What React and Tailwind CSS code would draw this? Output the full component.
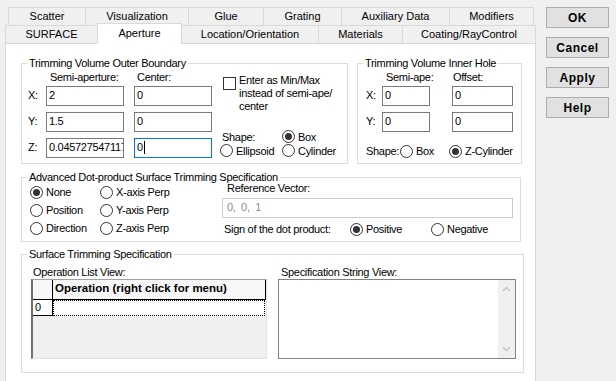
import React from "react";

const backTabs = [
    ["Scatter", 77],
    ["Visualization", 103],
    ["Glue", 75],
    ["Grating", 78],
    ["Auxiliary Data", 108],
    ["Modifiers", 85],
];

const frontTabs = [
    ["SURFACE", 92],
    ["Aperture", 85, true],
    ["Location/Orientation", 136],
    ["Materials", 84],
    ["Coating/RayControl", 134],
];

function Radio({ checked, label, className = "" }) {
    return (
        <div className={`flex h-[14px] items-center ${className}`}>
            <span className="flex h-[13px] w-[13px] shrink-0 items-center justify-center rounded-full border border-[#333333] bg-white">
                {checked && <span className="h-[7px] w-[7px] rounded-full bg-[#333333]" />}
            </span>
            <span className="ml-[3px] whitespace-nowrap">{label}</span>
        </div>
    );
}

function Field({ children, className = "" }) {
    return (
        <div
            className={`flex h-[20px] shrink-0 items-center overflow-hidden whitespace-nowrap border border-[#7a7a7a] bg-white pl-[2px] ${className}`}
        >
            {children}
        </div>
    );
}

function Group({ title, className = "", children }) {
    return (
        <fieldset className={`shrink-0 border border-[#dcdcdc] ${className}`}>
            <legend className="ml-[5px] px-[2px] leading-[13px]">{title}</legend>
            {children}
        </fieldset>
    );
}

function Chevron({ up }) {
    return (
        <svg width="9" height="6" viewBox="0 0 9 6">
            <path
                d={up ? "M1 5 L4.5 1.5 L8 5" : "M1 1 L4.5 4.5 L8 1"}
                fill="none"
                stroke="#c2c2c2"
                strokeWidth="1.4"
            />
        </svg>
    );
}

function OuterBoundary() {
    return (
        <Group title="Trimming Volume Outer Boundary" className="h-[107px] w-[327px]">
            <div className="flex pl-[6px]">
                <div className="flex flex-col">
                    <div className="flex h-[14px] leading-[14px]">
                        <span className="ml-[22px] w-[87px]">Semi-aperture:</span>
                        <span>Center:</span>
                    </div>
                    <div className="mt-[2px] flex h-[20px] items-center">
                        <span className="w-[18px]">X:</span>
                        <Field className="w-[78px]">2</Field>
                        <Field className="ml-[10px] w-[78px]">0</Field>
                    </div>
                    <div className="mt-[6px] flex h-[20px] items-center">
                        <span className="w-[18px]">Y:</span>
                        <Field className="w-[78px]">1.5</Field>
                        <Field className="ml-[10px] w-[78px]">0</Field>
                    </div>
                    <div className="mt-[6px] flex h-[20px] items-center">
                        <span className="w-[18px]">Z:</span>
                        <Field className="w-[78px]">0.045727547117</Field>
                        <Field className="ml-[10px] w-[78px] border-[#0078d7]">
                            0<span className="ml-[1px] h-[13px] w-[1px] bg-black" />
                        </Field>
                    </div>
                </div>
                <div className="ml-[8px] flex flex-col pt-[4px]">
                    <div className="flex">
                        <span className="ml-[3px] mt-[3px] h-[13px] w-[13px] shrink-0 border border-[#333333] bg-white" />
                        <div className="ml-[3px] leading-[13px]">
                            <div>Enter as Min/Max</div>
                            <div>instead of semi-ape/</div>
                            <div>center</div>
                        </div>
                    </div>
                    <div className="mt-[17px] grid grid-cols-[62px_auto] leading-[14px]">
                        <span className="pl-[2px]">Shape:</span>
                        <Radio checked label="Box" />
                        <Radio label="Ellipsoid" />
                        <Radio label="Cylinder" />
                    </div>
                </div>
            </div>
        </Group>
    );
}

function InnerHole() {
    return (
        <Group title="Trimming Volume Inner Hole" className="ml-[9px] h-[107px] w-[165px]">
            <div className="flex flex-col pl-[8px]">
                <div className="flex h-[14px] leading-[14px]">
                    <span className="ml-[20px] w-[67px]">Semi-ape:</span>
                    <span>Offset:</span>
                </div>
                <div className="mt-[2px] flex h-[20px] items-center">
                    <span className="w-[16px]">X:</span>
                    <Field className="w-[48px]">0</Field>
                    <Field className="ml-[22px] w-[61px]">0</Field>
                </div>
                <div className="mt-[6px] flex h-[20px] items-center">
                    <span className="w-[16px]">Y:</span>
                    <Field className="w-[48px]">0</Field>
                    <Field className="ml-[22px] w-[61px]">0</Field>
                </div>
                <div className="mt-[13px] flex h-[14px] items-center">
                    <span className="w-[34px]">Shape:</span>
                    <Radio label="Box" className="w-[49px]" />
                    <Radio checked label="Z-Cylinder" />
                </div>
            </div>
        </Group>
    );
}

function DotProduct() {
    return (
        <Group
            title="Advanced Dot-product Surface Trimming Specification"
            className="mt-[7px] h-[71px] w-[500px]"
        >
            <div className="flex pl-[8px]">
                <div className="flex w-[70px] flex-col">
                    <Radio checked label="None" className="h-[18px]" />
                    <Radio label="Position" className="h-[18px]" />
                    <Radio label="Direction" className="h-[18px]" />
                </div>
                <div className="flex w-[122px] flex-col">
                    <Radio label="X-axis Perp" className="h-[18px]" />
                    <Radio label="Y-axis Perp" className="h-[18px]" />
                    <Radio label="Z-axis Perp" className="h-[18px]" />
                </div>
                <div className="-mt-[2px] flex flex-col">
                    <div className="h-[12px] pl-[5px] leading-[12px]">Reference Vector:</div>
                    <Field className="mt-[4px] h-[19px] w-[291px] border-[#cccccc] pl-[4px] text-[#8a8a8a]">
                        0, &nbsp;0, &nbsp;1
                    </Field>
                    <div className="mt-[5px] flex h-[14px] items-center">
                        <span className="w-[128px] pl-[2px]">Sign of the dot product:</span>
                        <Radio checked label="Positive" className="w-[81px]" />
                        <Radio label="Negative" />
                    </div>
                </div>
            </div>
        </Group>
    );
}

function TrimmingSpec() {
    return (
        <Group title="Surface Trimming Specification" className="mt-[6px] h-[125px] w-[503px]">
            <div className="flex pl-[9px] pt-[4px]">
                <div className="flex flex-col">
                    <div className="h-[14px] pl-[2px] leading-[14px]">Operation List View:</div>
                    <div className="flex h-[80px] w-[236px] flex-col border-b border-l-2 border-r border-t border-b-[#e3e3e3] border-l-[#6f6f6f] border-r-[#e3e3e3] border-t-[#a0a0a0] bg-[#f0f0f0]">
                        <div className="flex h-[20px] border-b border-black bg-[#f7f7f7]">
                            <div className="w-[20px] border-r border-black" />
                            <div className="flex w-[213px] items-center border-r border-black pl-[2px] text-[11.5px] font-bold tracking-normal">
                                Operation (right click for menu)
                            </div>
                        </div>
                        <div className="flex h-[16px]">
                            <div className="flex w-[20px] items-center border-b border-r border-black bg-white pl-[2px]">
                                0
                            </div>
                            <div className="w-[212px] border border-dotted border-black bg-white" />
                        </div>
                    </div>
                </div>
                <div className="ml-[11px] flex flex-col">
                    <div className="h-[14px] pl-[3px] leading-[14px]">Specification String View:</div>
                    <div className="flex h-[80px] w-[238px] justify-end border border-[#828282] bg-white">
                        <div className="flex w-[17px] flex-col items-center justify-between bg-[#f0f0f0] py-[6px]">
                            <Chevron up />
                            <Chevron />
                        </div>
                    </div>
                </div>
            </div>
        </Group>
    );
}

export default function App() {
    return (
        <div className="flex h-[381px] w-[616px] overflow-hidden bg-[#f0f0f0] font-['Liberation_Sans',Arial,sans-serif] text-[11px] text-black">
            <div className="ml-[5px] mt-[7px] flex w-[531px] shrink-0 flex-col">
                <div className="ml-[3px] flex h-[18px]">
                    {backTabs.map(([label, w], i) => (
                        <div
                            key={label}
                            style={{ width: w }}
                            className={`flex items-center justify-center border-l border-t border-[#d9d9d9] ${
                                i === backTabs.length - 1 ? "border-r" : ""
                            }`}
                        >
                            {label}
                        </div>
                    ))}
                </div>
                <div className="flex h-[18px]">
                    {frontTabs.map(([label, w, selected], i) =>
                        selected ? (
                            <div
                                key={label}
                                style={{ width: w }}
                                className="relative z-10 -mt-[2px] flex h-[21px] items-center justify-center border-l border-r border-t border-[#d9d9d9] bg-white pb-[1px]"
                            >
                                {label}
                            </div>
                        ) : (
                            <div
                                key={label}
                                style={{ width: w }}
                                className={`flex items-center justify-center border-t border-[#d9d9d9] ${
                                    frontTabs[i - 1]?.[2] ? "" : "border-l"
                                } ${i === frontTabs.length - 1 ? "border-r" : ""}`}
                            >
                                {label}
                            </div>
                        )
                    )}
                </div>
                <div className="h-[350px] shrink-0 border border-[#d9d9d9] bg-white pl-[15px] pt-[13px] tracking-[-0.3px]">
                    <div className="flex">
                        <OuterBoundary />
                        <InnerHole />
                    </div>
                    <DotProduct />
                    <TrimmingSpec />
                </div>
            </div>
            <div className="ml-[10px] mt-[7px] flex flex-col gap-[9px]">
                {["OK", "Cancel", "Apply", "Help"].map((b) => (
                    <button
                        key={b}
                        className="h-[21px] w-[63px] border border-[#adadad] bg-[#e1e1e1] text-[12px] font-bold tracking-[0.5px]"
                    >
                        {b}
                    </button>
                ))}
            </div>
        </div>
    );
}
